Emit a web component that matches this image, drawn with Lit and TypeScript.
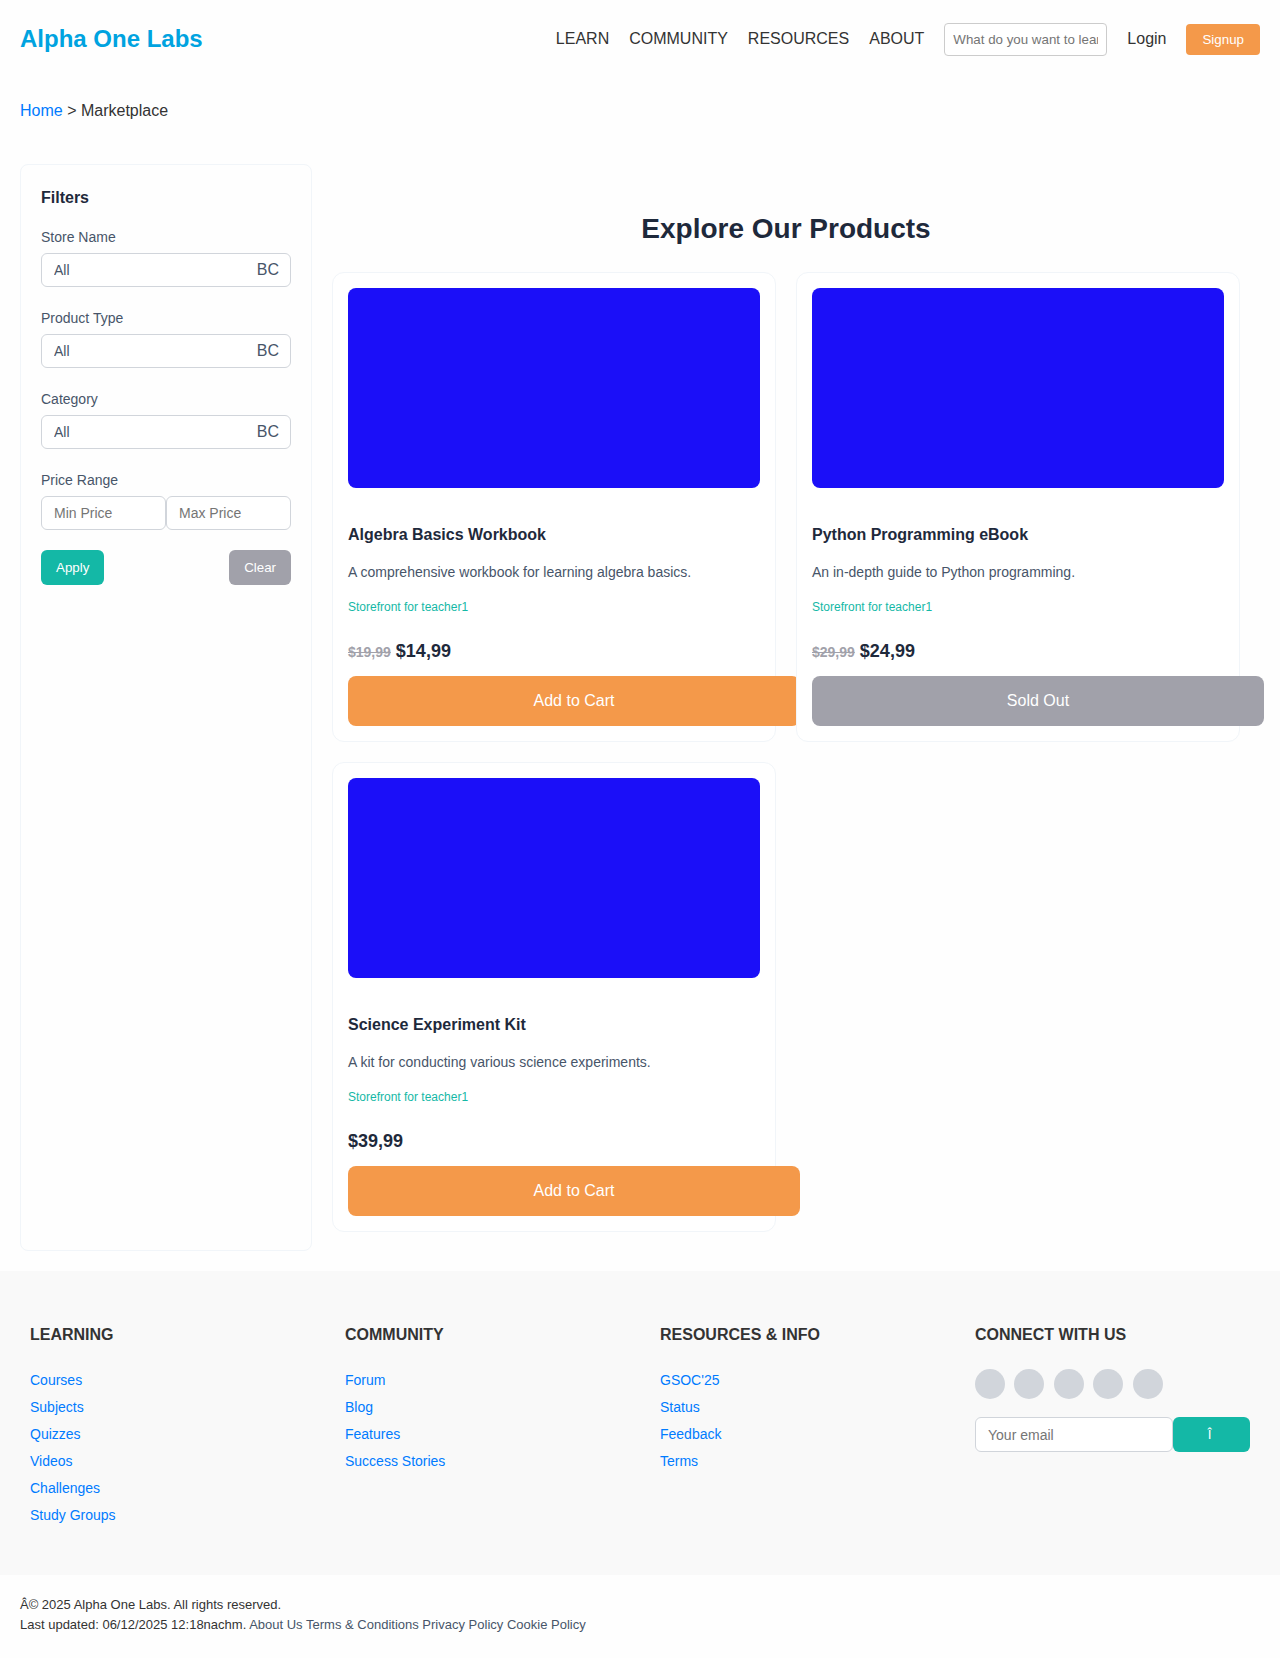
import { LitElement, html, css, nothing } from "lit";
import { customElement, property } from "lit/decorators.js";

interface Product {
  name: string;
  description: string;
  store: string;
  price: string;
  oldPrice?: string;
  soldOut?: boolean;
}

const PRODUCTS: Product[] = [
  {
    name: "Algebra Basics Workbook",
    description: "A comprehensive workbook for learning algebra basics.",
    store: "Storefront for teacher1",
    price: "$14,99",
    oldPrice: "$19,99",
  },
  {
    name: "Python Programming eBook",
    description: "An in-depth guide to Python programming.",
    store: "Storefront for teacher1",
    price: "$24,99",
    oldPrice: "$29,99",
    soldOut: true,
  },
  {
    name: "Science Experiment Kit",
    description: "A kit for conducting various science experiments.",
    store: "Storefront for teacher1",
    price: "$39,99",
  },
];

const FILTERS = [
  { id: "store", label: "Store Name" },
  { id: "type", label: "Product Type" },
  { id: "category", label: "Category" },
];

const LINK_COLUMNS = [
  {
    title: "LEARNING",
    links: ["Courses", "Subjects", "Quizzes", "Videos", "Challenges", "Study Groups"],
  },
  { title: "COMMUNITY", links: ["Forum", "Blog", "Features", "Success Stories"] },
  { title: "RESOURCES & INFO", links: ["GSOC'25", "Status", "Feedback", "Terms"] },
];

const SOCIALS = ["Facebook", "Twitter", "Instagram", "LinkedIn", "GitHub"];

const base = css`
  * {
    box-sizing: border-box;
  }
  :host {
    display: block;
    font-family: "Liberation Sans", Arial, sans-serif;
    font-size: 16px;
    line-height: 26px;
    color: #333;
  }
  h1,
  h2,
  h3,
  p,
  ul {
    margin: 0;
    padding: 0;
  }
  a {
    color: inherit;
    text-decoration: none;
  }
  button,
  input,
  select {
    font-family: inherit;
    margin: 0;
  }
  button {
    border: none;
    color: #fff;
    cursor: pointer;
  }
  .field {
    height: 34px;
    padding: 0 12px;
    border: 1px solid #d1d5db;
    border-radius: 6px;
    background: #fff;
    color: #475569;
    font-size: 14px;
  }
`;

@customElement("site-header")
export class SiteHeader extends LitElement {
  static styles = [
    base,
    css`
      .bar {
        display: flex;
        align-items: center;
        justify-content: space-between;
        padding: 20px;
      }
      .logo {
        font-size: 24px;
        line-height: 38px;
        font-weight: bold;
        color: #00a3e0;
      }
      .nav {
        display: flex;
        align-items: center;
        gap: 20px;
      }
      .search {
        width: 163px;
        padding: 8px;
        border: 1px solid #ccc;
        border-radius: 4px;
        background: #fff;
      }
      .signup {
        padding: 8px 16px;
        border-radius: 4px;
        background: #f4994a;
      }
    `,
  ];

  render() {
    return html`
      <header class="bar">
        <a class="logo" href="#">Alpha One Labs</a>
        <nav class="nav">
          ${["LEARN", "COMMUNITY", "RESOURCES", "ABOUT"].map((t) => html`<a href="#">${t}</a>`)}
          <input
            class="search"
            type="text"
            aria-label="Search"
            placeholder="What do you want to learn?"
          />
          <a href="#">Login</a>
          <button class="signup" type="button">Signup</button>
        </nav>
      </header>
    `;
  }
}

@customElement("filter-panel")
export class FilterPanel extends LitElement {
  static styles = [
    base,
    css`
      .panel {
        height: 100%;
        padding: 20px;
        border: 1px solid #f1f5f9;
        border-radius: 8px;
        color: #475569;
      }
      .title {
        font-size: 16px;
        line-height: 26px;
        color: #1e293b;
        margin-bottom: 15px;
      }
      .groups {
        display: flex;
        flex-direction: column;
        gap: 20px;
      }
      .group {
        display: flex;
        flex-direction: column;
        gap: 5px;
      }
      .label {
        font-size: 14px;
        line-height: 22px;
      }
      .choice {
        position: relative;
        display: flex;
      }
      .choice .field {
        flex: 1;
        appearance: none;
      }
      .mark {
        position: absolute;
        right: 12px;
        top: 4px;
        pointer-events: none;
      }
      .range {
        display: flex;
      }
      .range .field {
        flex: 1;
        min-width: 0;
      }
      .actions {
        display: flex;
        justify-content: space-between;
      }
      .action {
        padding: 10px 15px;
        border-radius: 6px;
      }
      .apply {
        background: #14b8a6;
      }
      .clear {
        background: #a1a1aa;
      }
    `,
  ];

  render() {
    return html`
      <aside class="panel">
        <h3 class="title">Filters</h3>
        <form class="groups" @submit=${(e: Event) => e.preventDefault()}>
          ${FILTERS.map(
            (f) => html`
              <div class="group">
                <label class="label" for=${f.id}>${f.label}</label>
                <div class="choice">
                  <select class="field" id=${f.id}>
                    <option>All</option>
                  </select>
                  <span class="mark" aria-hidden="true">BC</span>
                </div>
              </div>
            `,
          )}
          <div class="group">
            <label class="label" for="min-price">Price Range</label>
            <div class="range">
              <input class="field" id="min-price" type="text" placeholder="Min Price" />
              <input class="field" type="text" aria-label="Max Price" placeholder="Max Price" />
            </div>
          </div>
          <div class="actions">
            <button class="action apply" type="submit">Apply</button>
            <button class="action clear" type="reset">Clear</button>
          </div>
        </form>
      </aside>
    `;
  }
}

@customElement("product-card")
export class ProductCard extends LitElement {
  static styles = [
    base,
    css`
      .card {
        height: 100%;
        padding: 15px;
        border: 1px solid #f1f5f9;
        border-radius: 12px;
        background: #fff;
      }
      .image {
        height: 200px;
        border-radius: 8px;
        background: #1b0ff8;
        margin-bottom: 34px;
      }
      .name {
        font-size: 16px;
        line-height: 26px;
        color: #1e293b;
        margin-bottom: 13px;
      }
      .description {
        font-size: 14px;
        line-height: 22px;
        color: #475569;
        margin-bottom: 14px;
      }
      .store {
        display: block;
        font-size: 12px;
        line-height: 20px;
        color: #14b8a6;
        margin-bottom: 20px;
      }
      .price {
        font-size: 18px;
        line-height: 29px;
        font-weight: bold;
        color: #1e293b;
        margin-bottom: 10px;
      }
      .old {
        font-size: 14px;
        line-height: 22px;
        color: #a1a1aa;
      }
      /* Full width plus its own padding, so it runs past the card edge. */
      .buy {
        display: block;
        box-sizing: content-box;
        width: 100%;
        padding: 12px 20px;
        border-radius: 8px;
        background: #f4994a;
        font-size: 16px;
        line-height: 26px;
      }
      .sold {
        background: #a1a1aa;
      }
    `,
  ];

  @property({ attribute: false }) product!: Product;

  render() {
    const p = this.product;
    return html`
      <article class="card">
        <div class="image"></div>
        <h3 class="name">${p.name}</h3>
        <p class="description">${p.description}</p>
        <a class="store" href="#">${p.store}</a>
        <p class="price">
          ${p.oldPrice ? html`<s class="old">${p.oldPrice}</s>` : nothing} ${p.price}
        </p>
        <button class="buy ${p.soldOut ? "sold" : ""}" type="button">
          ${p.soldOut ? "Sold Out" : "Add to Cart"}
        </button>
      </article>
    `;
  }
}

@customElement("site-footer")
export class SiteFooter extends LitElement {
  static styles = [
    base,
    css`
      .columns {
        display: grid;
        grid-template-columns: repeat(4, minmax(0, 1fr));
        gap: 20px;
        padding: 41px 20px 39px;
        background: #f9f9f9;
      }
      .column {
        padding: 10px;
      }
      .title {
        font-size: 16px;
        line-height: 26px;
        margin-bottom: 21px;
      }
      .links {
        display: flex;
        flex-direction: column;
        gap: 5px;
        list-style: none;
        font-size: 14px;
        line-height: 22px;
        color: #007bff;
      }
      .socials {
        line-height: 30px;
        margin-bottom: 18px;
      }
      .social {
        display: inline-block;
        width: 30px;
        height: 30px;
        margin-right: 5px;
        border-radius: 50%;
        background: #d1d5db;
        vertical-align: top;
      }
      .subscribe {
        display: flex;
      }
      .email {
        flex: 1;
        min-width: 0;
        height: 35px;
      }
      .send {
        width: 77px;
        border-radius: 6px;
        background: #14b8a6;
      }
      .legal {
        padding: 20px;
        font-size: 13px;
        line-height: 20px;
      }
      .policies {
        color: #475569;
      }
    `,
  ];

  render() {
    return html`
      <footer>
        <div class="columns">
          ${LINK_COLUMNS.map(
            (c) => html`
              <section class="column">
                <h3 class="title">${c.title}</h3>
                <ul class="links">
                  ${c.links.map((l) => html`<li><a href="#">${l}</a></li>`)}
                </ul>
              </section>
            `,
          )}
          <section class="column">
            <h3 class="title">CONNECT WITH US</h3>
            <div class="socials">
              ${SOCIALS.map((s) => html`<a class="social" href="#" aria-label=${s}></a> `)}
            </div>
            <form class="subscribe" @submit=${(e: Event) => e.preventDefault()}>
              <input
                class="field email"
                type="email"
                aria-label="Your email"
                placeholder="Your email"
              />
              <button class="send" type="submit">Î&nbsp;</button>
            </form>
          </section>
        </div>
        <div class="legal">
          <p>Â© 2025 Alpha One Labs. All rights reserved.</p>
          <p>
            Last updated: 06/12/2025 12:18nachm.
            <span class="policies">
              <a href="#">About Us</a> <a href="#">Terms &amp; Conditions</a>
              <a href="#">Privacy Policy</a> <a href="#">Cookie Policy</a>
            </span>
          </p>
        </div>
      </footer>
    `;
  }
}

@customElement("app-root")
export class AppRoot extends LitElement {
  static styles = [
    base,
    css`
      .page {
        min-height: 100vh;
        background: #fefefe;
      }
      .crumbs {
        padding: 20px;
      }
      .home {
        color: #007bff;
      }
      .shop {
        display: flex;
        padding: 20px;
      }
      .filters {
        flex: none;
        width: 292px;
      }
      .main {
        flex: 1;
        min-width: 0;
        padding: 42px 20px 19px;
      }
      .heading {
        font-size: 28px;
        line-height: 46px;
        text-align: center;
        color: #1e293b;
        margin-bottom: 20px;
      }
      .grid {
        display: grid;
        grid-template-columns: repeat(2, minmax(0, 1fr));
        gap: 20px;
      }
    `,
  ];

  render() {
    return html`
      <div class="page">
        <site-header></site-header>
        <nav class="crumbs" aria-label="Breadcrumb">
          <a class="home" href="#">Home</a> &gt; Marketplace
        </nav>
        <div class="shop">
          <filter-panel class="filters"></filter-panel>
          <main class="main">
            <h1 class="heading">Explore Our Products</h1>
            <div class="grid">
              ${PRODUCTS.map((p) => html`<product-card .product=${p}></product-card>`)}
            </div>
          </main>
        </div>
        <site-footer></site-footer>
      </div>
    `;
  }
}
